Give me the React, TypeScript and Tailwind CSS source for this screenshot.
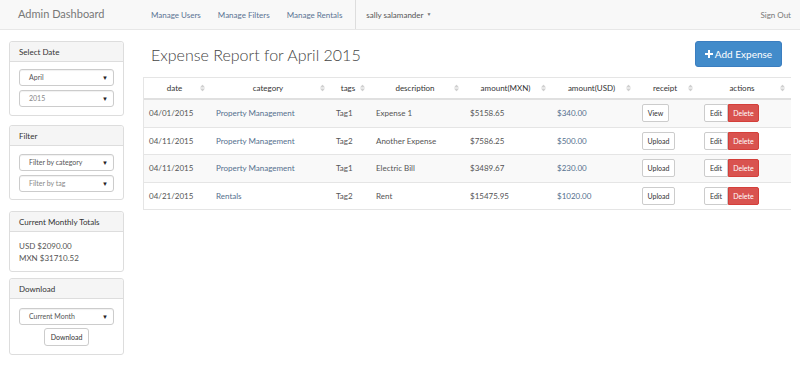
import React from "react";

const navLinks = ["Manage Users", "Manage Filters", "Manage Rentals"];

const rows = [
  { date: "04/01/2015", category: "Property Management", tag: "Tag1", description: "Expense 1", mxn: "$5158.65", usd: "$340.00", receipt: "View" },
  { date: "04/11/2015", category: "Property Management", tag: "Tag2", description: "Another Expense", mxn: "$7586.25", usd: "$500.00", receipt: "Upload" },
  { date: "04/11/2015", category: "Property Management", tag: "Tag1", description: "Electric Bill", mxn: "$3489.67", usd: "$230.00", receipt: "Upload" },
  { date: "04/21/2015", category: "Rentals", tag: "Tag2", description: "Rent", mxn: "$15475.95", usd: "$1020.00", receipt: "Upload" },
];

const columns = [
  { label: "date", w: "w-[67px]" },
  { label: "category", w: "w-[120px]" },
  { label: "tags", w: "w-[40px]" },
  { label: "description", w: "w-[94px]" },
  { label: "amount(MXN)", w: "w-[87px]" },
  { label: "amount(USD)", w: "w-[85px]" },
  { label: "receipt", w: "w-[62px]" },
  { label: "actions", w: "" },
];

const SortIcon = () => (
  <svg width="5" height="7" viewBox="0 0 5 7" className="absolute right-[6px] top-1/2 -translate-y-1/2">
    <path d="M2.5 0 L5 3 H0 Z" fill="#d0d0d0" />
    <path d="M0 4 H5 L2.5 7 Z" fill="#d0d0d0" />
  </svg>
);

const FakeSelect = ({ value, faded }: { value: string; faded?: boolean }) => (
  <div className="h-[17px] border border-[#ccc] rounded-[3px] bg-white flex items-center justify-between pl-[9px] pr-[5px] shadow-[inset_0_1px_1px_rgba(0,0,0,0.06)]">
    <span className={faded ? "text-[#888] text-[7px]" : "text-[#555] text-[7px]"}>{value}</span>
    <span className="text-[#222] text-[6px] leading-none">▼</span>
  </div>
);

const Panel = ({ title, children, className = "" }: { title: string; children: React.ReactNode; className?: string }) => (
  <div className={`border border-[#ddd] rounded-[3px] bg-white ${className}`}>
    <div className="h-[20px] bg-[#f5f5f5] border-b border-[#ddd] px-[9px] flex items-center text-[8px] text-[#333] rounded-t-[3px]">
      {title}
    </div>
    {children}
  </div>
);

export default function App() {
  return (
    <div className="w-[800px] h-[392px] bg-white overflow-hidden" style={{ fontFamily: "Lato, 'Open Sans', sans-serif" }}>
      {/* navbar */}
      <div className="h-[30px] bg-[#f8f8f8] border-b border-[#e7e7e7] flex items-center">
        <div className="pl-[18px] w-[151px] text-[11px] text-[#777]">Admin Dashboard</div>
        <div className="flex items-center h-full">
          {navLinks.map((l) => (
            <span key={l} className="text-[8px] text-[#5a7393] mr-[17px]">{l}</span>
          ))}
          <div className="h-full border-l border-[#ddd] ml-[-4px] pl-[10px] flex items-center text-[8px] text-[#555]">
            sally salamander <span className="ml-[3px] text-[5px] text-[#777]">▼</span>
          </div>
        </div>
        <div className="ml-auto pr-[9px] text-[8px] text-[#777]">Sign Out</div>
      </div>

      <div className="flex px-[9px] pt-[11px] gap-[19px]">
        {/* sidebar */}
        <div className="w-[115px] flex flex-col shrink-0">
          <Panel title="Select Date">
            <div className="flex flex-col gap-[4px] px-[9px] pt-[7px] pb-[8px]">
              <FakeSelect value="April" />
              <FakeSelect value="2015" faded />
            </div>
          </Panel>
          <Panel title="Filter" className="mt-[9px]">
            <div className="flex flex-col gap-[4px] px-[9px] pt-[8px] pb-[7px]">
              <FakeSelect value="Filter by category" />
              <FakeSelect value="Filter by tag" faded />
            </div>
          </Panel>
          <Panel title="Current Monthly Totals" className="mt-[11px]">
            <div className="px-[9px] pt-[8px] pb-[7px] text-[8px] text-[#555] leading-[12px]">
              <div>USD $2090.00</div>
              <div>MXN $31710.52</div>
            </div>
          </Panel>
          <Panel title="Download" className="mt-[6px]">
            <div className="flex flex-col items-center gap-[3px] px-[9px] pt-[9px] pb-[8px]">
              <div className="w-full">
                <FakeSelect value="Current Month" />
              </div>
              <div className="h-[18px] px-[6px] border border-[#ccc] rounded-[3px] bg-white flex items-center text-[7px] text-[#333]">
                Download
              </div>
            </div>
          </Panel>
        </div>

        {/* main */}
        <div className="flex-1">
          <div className="flex items-start justify-between h-[36px]">
            <h1 className="text-[16px] font-light text-[#444] pl-[8px] pt-[2px]">Expense Report for April 2015</h1>
            <button className="mr-[9px] h-[26px] w-[87px] bg-[#428bca] border border-[#3b7ec0] rounded-[3px] text-white text-[10px] flex items-center justify-center gap-[2px]">
              <svg width="8" height="8" viewBox="0 0 8 8">
                <path d="M3 0 H5 V3 H8 V5 H5 V8 H3 V5 H0 V3 H3 Z" fill="white" />
              </svg>
              Add Expense
            </button>
          </div>

          <div className="border-l border-[#e5e5e5]">
            <div className="flex h-[23px] border-t border-[#e5e5e5] border-b-2 border-b-[#e0e0e0] text-[8px] text-[#333]">
              {columns.map((c) => (
                <div key={c.label} className={`relative ${c.w || "flex-1"} flex items-center justify-center pr-[6px]`}>
                  {c.label}
                  <SortIcon />
                </div>
              ))}
            </div>
            {rows.map((r, i) => (
              <div
                key={i}
                className={`flex h-[27.5px] items-center border-b border-[#e5e5e5] text-[8px] text-[#555] ${i % 2 === 0 ? "bg-[#f9f9f9]" : "bg-white"}`}
              >
                <div className="w-[67px] pl-[5px]">{r.date}</div>
                <div className="w-[120px] pl-[5px] text-[#55708e]">{r.category}</div>
                <div className="w-[40px] pl-[5px]">{r.tag}</div>
                <div className="w-[94px] pl-[5px]">{r.description}</div>
                <div className="w-[87px] pl-[5px]">{r.mxn}</div>
                <div className="w-[85px] pl-[5px] text-[#55708e]">{r.usd}</div>
                <div className="w-[62px] pl-[5px]">
                  <span className={`inline-flex items-center justify-center h-[18px] ${r.receipt === "View" ? "w-[27px]" : "w-[33px]"} border border-[#ccc] rounded-[2px] bg-white text-[7px] text-[#333]`}>
                    {r.receipt}
                  </span>
                </div>
                <div className="flex-1 pl-[5px] flex">
                  <span className="inline-flex items-center justify-center h-[18px] w-[24px] border border-[#ccc] rounded-l-[2px] bg-white text-[7px] text-[#333]">Edit</span>
                  <span className="inline-flex items-center justify-center h-[18px] w-[31px] bg-[#d9534f] border border-[#d43f3a] rounded-r-[2px] text-[7px] text-white">Delete</span>
                </div>
              </div>
            ))}
          </div>
        </div>
      </div>
    </div>
  );
}
